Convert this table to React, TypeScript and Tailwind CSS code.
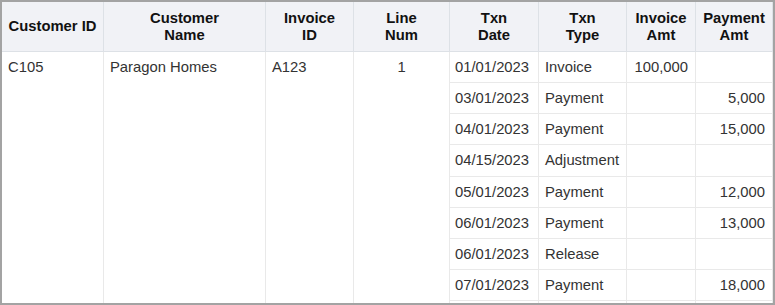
const headers = [
  { label: ["Customer ID"] },
  { label: ["Customer", "Name"] },
  { label: ["Invoice", "ID"] },
  { label: ["Line", "Num"] },
  { label: ["Txn", "Date"] },
  { label: ["Txn", "Type"] },
  { label: ["Invoice", "Amt"] },
  { label: ["Payment", "Amt"] },
];

const txns = [
  { date: "01/01/2023", type: "Invoice", inv: "100,000", pay: "", tall: false },
  { date: "03/01/2023", type: "Payment", inv: "", pay: "5,000", tall: false },
  { date: "04/01/2023", type: "Payment", inv: "", pay: "15,000", tall: false },
  { date: "04/15/2023", type: "Adjustment", inv: "", pay: "", tall: true },
  { date: "05/01/2023", type: "Payment", inv: "", pay: "12,000", tall: false },
  { date: "06/01/2023", type: "Payment", inv: "", pay: "13,000", tall: false },
  { date: "06/01/2023", type: "Release", inv: "", pay: "", tall: false },
  { date: "07/01/2023", type: "Payment", inv: "", pay: "18,000", tall: false },
];

export default function App() {
  return (
    <div className="w-[775px] h-[305px] overflow-hidden border-2 border-[#a3a3a3] bg-white font-['Liberation_Sans',Arial,sans-serif] text-[14.8px]">
      <div className="grid grid-cols-[102px_162px_88px_96px_89px_88px_69px_77px]">
        {/* header row */}
        {headers.map((h, i) => (
          <div
            key={i}
            className="h-[50px] flex flex-col items-center justify-center bg-[#f1f2f6] border-r border-b border-[#dde1e6] font-bold text-[#111] leading-[17px] text-center"
          >
            {h.label.map((l) => (
              <span key={l}>{l}</span>
            ))}
          </div>
        ))}

        {/* grouped cells spanning all txn rows */}
        <div className="row-span-9 border-r border-[#e9e9e9] pl-[6px] pt-[7px] leading-[17px] text-[#333]">C105</div>
        <div className="row-span-9 border-r border-[#e9e9e9] pl-[6px] pt-[7px] leading-[17px] text-[#333]">Paragon Homes</div>
        <div className="row-span-9 border-r border-[#e9e9e9] pl-[6px] pt-[7px] leading-[17px] text-[#333]">A123</div>
        <div className="row-span-9 border-r border-[#e9e9e9] pt-[7px] leading-[17px] text-center text-[#333]">1</div>

        {txns.map((t, i) => {
          const h = t.tall ? "h-[32px]" : "h-[31px]";
          return (
            <div key={i} className="contents">
              <div className={`col-start-5 ${h} flex items-center px-[5px] border-r border-b border-[#e9e9e9] text-[#333]`}>{t.date}</div>
              <div className={`${h} flex items-center px-[6px] border-r border-b border-[#e9e9e9] text-[#333]`}>{t.type}</div>
              <div className={`${h} flex items-center justify-end px-[7px] border-r border-b border-[#e9e9e9] text-[#333]`}>{t.inv}</div>
              <div className={`${h} flex items-center justify-end px-[7px] border-r border-b border-[#e9e9e9] text-[#333]`}>{t.pay}</div>
            </div>
          );
        })}
        <div className="col-start-5 h-[10px] border-r border-[#e9e9e9]" />
        <div className="h-[10px] border-r border-[#e9e9e9]" />
        <div className="h-[10px] border-r border-[#e9e9e9]" />
        <div className="h-[10px] border-r border-[#e9e9e9]" />
      </div>
    </div>
  );
}
